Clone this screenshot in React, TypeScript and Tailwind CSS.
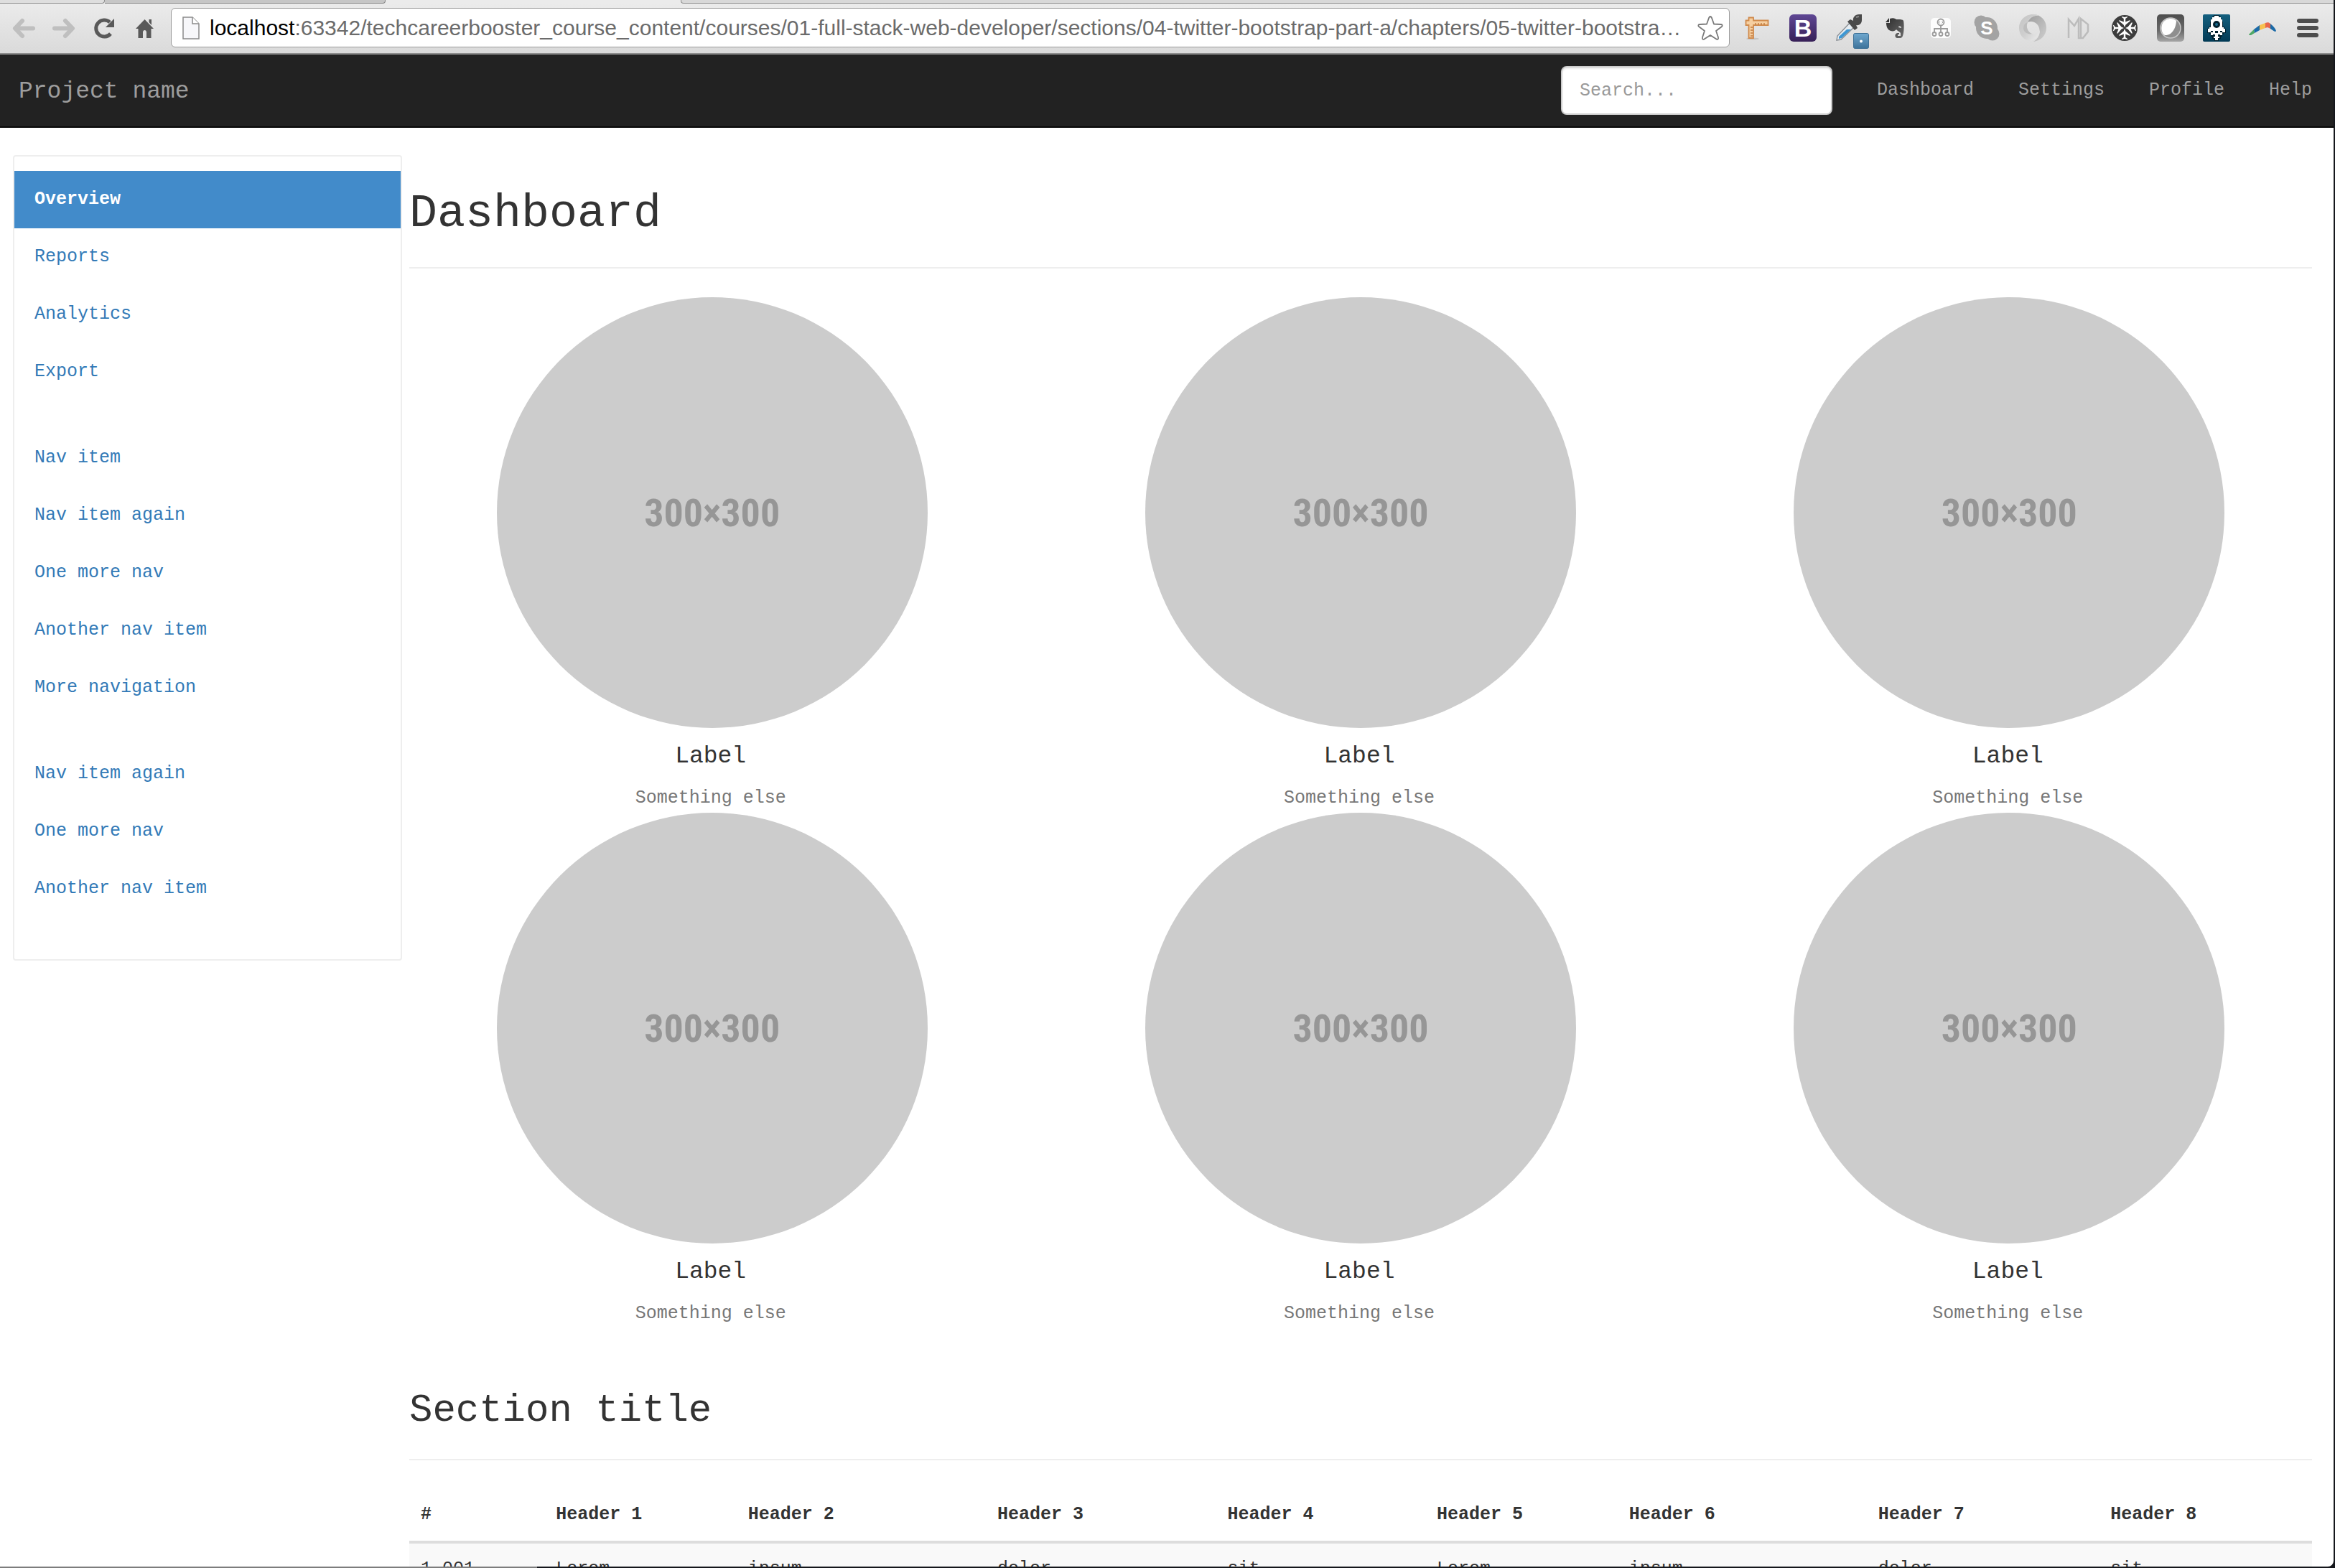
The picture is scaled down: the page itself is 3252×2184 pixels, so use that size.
import React from "react";

const pageFont = "font-['Liberation_Mono',monospace]";

function PageIcon() {
  return (
    <svg width="24" height="32" viewBox="0 0 24 32" className="shrink-0">
      <path d="M1 1H14L23 10V31H1Z" fill="#f7f7fa" stroke="#8b8b8b" strokeWidth="1.5" />
      <path d="M14 1V10H23" fill="#fff" stroke="#8b8b8b" strokeWidth="1.5" />
    </svg>
  );
}

const extensions: { name: string; art: React.ReactNode }[] = [
  {
    name: "Page ruler",
    art: (
      <>
        <ellipse cx="13" cy="34" rx="9" ry="1.5" fill="#c4c4c4" />
        <path d="M7.500 4.500H14V8.500H34.500V15H14V33H7.500V15H3.500V8.500H7.500Z" fill="#f6cfa0" stroke="#d08a4c" strokeWidth="1.800" />
        <path d="M17 12V15M21 12V15M25 12V15M29 12V15M10 18H13M10 22H13M10 26H13M10 30H13" stroke="#c07a3e" strokeWidth="1.400" />
      </>
    ),
  },
  {
    name: "Bootstrap",
    art: (
      <>
        <rect width="38" height="38" rx="6" fill="url(#purple)" />
        <text x="19" y="31" textAnchor="middle" fontSize="34" fontWeight="700" fontFamily="Liberation Sans, sans-serif" fill="#fff">
          B
        </text>
      </>
    ),
  },
  {
    name: "Eyedropper",
    art: (
      <>
        <path d="M2 36L3 30L20 12L26 18L8 35Z" fill="#e6ecf1" stroke="#8d9297" strokeWidth="1.500" />
        <path d="M5 31L16 21H22L9 33L5 34Z" fill="#3d97d3" />
        <path d="M17 10L21 7L25 9C24 4 28 0 33 0H37V8C37 13 33 16 29 15L31 19L27 22Z" fill="#4a4a4a" />
        <path d="M29 4L33 3" stroke="#8a8a8a" strokeWidth="2" />
        <rect x="25.500" y="26.500" width="21" height="21" rx="2" fill="url(#badge)" stroke="#3f7196" />
        <circle cx="36" cy="37.500" r="2" fill="#fff" />
      </>
    ),
  },
  {
    name: "Evernote",
    art: (
      <>
        <path d="M12 6C17 4 20 6 21 7C26 7 30 7 31 9C32 13 32 25 30 30C29 34 25 33 22 33C18 32 19 26 23 26H25V28H23V30H27V26C26 24 22 23 21 21C19 24 14 24 11 22C8 20 7 15 7 12H12Z" fill="url(#dark)" />
        <path d="M6 11L11 5V11Z" fill="#333" />
        <path d="M24 18C24 16 28 16 28 19Z" fill="#e6e6e6" />
      </>
    ),
  },
  {
    name: "Site map",
    art: (
      <>
        <rect x="5" y="5" width="28" height="28" rx="5" fill="#fcfcfc" />
        <g fill="none" stroke="#9b9b9b" strokeWidth="1.800">
          <circle cx="19" cy="11" r="4.500" />
          <path d="M17.500 9.500L16 11L17.500 12.500M20.500 9.500L22 11L20.500 12.500" strokeWidth="1" />
          <path d="M19 15.500V25M10 25V20H28V25" />
          <circle cx="10" cy="27.500" r="2.500" />
          <circle cx="19" cy="27.500" r="2.500" />
          <circle cx="28" cy="27.500" r="2.500" />
        </g>
      </>
    ),
  },
  {
    name: "Skype",
    art: (
      <>
        <circle cx="19" cy="19" r="15" fill="#a3a3a3" />
        <circle cx="11" cy="11" r="9.500" fill="#a3a3a3" />
        <circle cx="27" cy="27" r="9.500" fill="#a3a3a3" />
        <text x="19" y="28" textAnchor="middle" fontSize="26" fontWeight="700" fontFamily="Liberation Sans, sans-serif" fill="#fff">
          S
        </text>
      </>
    ),
  },
  {
    name: "JSON viewer",
    art: (
      <>
        <path d="M19 0C31 0 38 9 38 19C38 29 30 37 20 38C27 34 30 27 28 19C26 12 19 8 12 11C15 4 22 1 27 2C24 0 22 0 19 0Z" fill="url(#ringB)" />
        <path d="M19 0C24 0 27 1 28 2C20 1 14 5 12 11C9 17 12 25 18 27C23 29 27 26 29 22C29 30 24 36 14 37C5 35 0 27 0 19C0 9 8 0 19 0Z" fill="url(#ringA)" />
        <path d="M12 11C9 17 12 25 18 27C13 28 7 26 6 20C6 15 8 12 12 11Z" fill="#bdbdbd" />
      </>
    ),
  },
  {
    name: "Markdown",
    art: <path d="M5 33V7L13 16L19 6V33H25L32 24V14L22 6V33" fill="none" stroke="#bcbcbc" strokeWidth="2.500" />,
  },
  {
    name: "Aircraft",
    art: (
      <>
        <circle cx="19" cy="19" r="18" fill="#3c3c3c" />
        {[0, 90, 180, 270].map((turn) => (
          <path
            key={turn}
            transform={`rotate(${turn} 19 19)`}
            d="M19 18L17.600 14.500L11.500 9.500V8L17.800 10.500V6L15 4V3L19 4L23 3V4L20.200 6V10.500L26.500 8V9.500L20.400 14.500Z"
            fill="#fff"
          />
        ))}
      </>
    ),
  },
  {
    name: "Lens",
    art: (
      <>
        <rect width="38" height="38" rx="5" fill="url(#lens)" />
        <circle cx="19" cy="19" r="14" fill="#8f8f8f" stroke="#c9c9c9" strokeWidth="1.500" />
        <path d="M11 29C16 30 26 25 27 9C22 4 12 5 8 12C5 18 6 26 11 29Z" fill="#fff" />
      </>
    ),
  },
  {
    name: "Rocket",
    art: (
      <>
        <rect width="38" height="38" rx="2" fill="url(#teal)" />
        <path d="M15 1H23V3H25V6H27V10H28V17H30V20H32V26H29V28H27V31H25V34H22V37H16V34H13V31H11V28H9V26H6V20H8V17H10V10H11V6H13V3H15Z" fill="#00202e" />
        <path d="M16 2H22V4H25V7H27V18H29V20H31V25H27V23H11V25H7V20H9V18H11V7H13V4H16Z" fill="#fff" />
        <path d="M11 25H14V23H17V26H21V23H24V25H27V29H24V28H21V31H23V33H21V36H17V33H15V31H17V28H14V29H11Z" fill="#fff" />
        <circle cx="19" cy="14" r="5" fill="#00202e" />
        <circle cx="19" cy="14" r="2" fill="#17688c" />
      </>
    ),
  },
  {
    name: "Boomerang",
    art: (
      <>
        <path d="M0 28L7 21L8 26L3 29C1 29 0 29 0 28Z" fill="#4fa866" />
        <path d="M7 21L15 15V22L8 26Z" fill="#1b6aa8" />
        <path d="M15 15L23 12V19L15 22Z" fill="#f7c14f" />
        <path d="M23 12C26 11 28 11 30 13V20C27 18 25 18 23 19Z" fill="#e8674c" />
        <path d="M30 13C34 16 37 20 38 23C37 25 36 24 30 20Z" fill="#1b6aa8" />
      </>
    ),
  },
  {
    name: "Menu",
    art: (
      <g fill="#4d4d4d">
        <rect x="3" y="6" width="30" height="6" rx="3" />
        <rect x="3" y="16" width="30" height="6" rx="3" />
        <rect x="3" y="26" width="30" height="6" rx="3" />
      </g>
    ),
  },
];

function Gradients() {
  return (
    <svg width="0" height="0" className="absolute">
      <defs>
        <linearGradient id="purple" x1="0" y1="0" x2="0" y2="1">
          <stop offset="0" stopColor="#5f4794" />
          <stop offset="1" stopColor="#372057" />
        </linearGradient>
        <linearGradient id="badge" x1="0" y1="0" x2="0" y2="1">
          <stop offset="0" stopColor="#6fa8cf" />
          <stop offset="1" stopColor="#3e739a" />
        </linearGradient>
        <linearGradient id="dark" x1="0" y1="0" x2="1" y2="1">
          <stop offset="0" stopColor="#2e2e2e" />
          <stop offset="1" stopColor="#6b6b6b" />
        </linearGradient>
        <linearGradient id="ringA" x1="0" y1="0" x2="1" y2="1">
          <stop offset="0" stopColor="#c4c4c4" />
          <stop offset="0.500" stopColor="#cfcfcf" />
          <stop offset="1" stopColor="#ededed" />
        </linearGradient>
        <linearGradient id="ringB" x1="0" y1="0" x2="1" y2="1">
          <stop offset="0" stopColor="#9c9c9c" />
          <stop offset="1" stopColor="#d0d0d0" />
        </linearGradient>
        <linearGradient id="lens" x1="0" y1="0" x2="0" y2="1">
          <stop offset="0" stopColor="#4e4e4e" />
          <stop offset="0.600" stopColor="#6a6a6a" />
          <stop offset="1" stopColor="#a5a5a5" />
        </linearGradient>
        <linearGradient id="teal" x1="0" y1="0" x2="0" y2="1">
          <stop offset="0" stopColor="#14607f" />
          <stop offset="1" stopColor="#023a55" />
        </linearGradient>
      </defs>
    </svg>
  );
}

function TabStrip() {
  return (
    <div className="flex h-[5px] bg-[#ebebeb]">
      <div className="w-[146px] rounded-br border-r border-b border-[#8e8e8e] bg-[#dedede]" />
      <div className="w-[391px] rounded-br border-r border-b border-[#8a8a8a] bg-[#c6c6c6]" />
      <div className="ml-[411px] flex-1 rounded-bl border-b border-l border-[#8e8e8e] bg-[#d8d8d8]" />
    </div>
  );
}

function Toolbar() {
  return (
    <div className="flex h-[71px] items-center border-b-2 border-[#8d8d8d] bg-linear-to-b from-[#ebebeb] to-[#dadada] pr-4 pl-[14px] pb-[2px]">
      <div className="flex shrink-0 gap-[18px]">
        <button aria-label="Back" className="h-[38px] w-[38px]">
          <svg width="38" height="38" viewBox="0 0 38 38" fill="none" stroke="#bfbfbf" strokeWidth="6" strokeLinecap="round" strokeLinejoin="round">
            <path d="M17 9L7 19.500L17 30M8 19.500H32" />
          </svg>
        </button>
        <button aria-label="Forward" className="h-[38px] w-[38px]">
          <svg width="38" height="38" viewBox="0 0 38 38" fill="none" stroke="#bfbfbf" strokeWidth="6" strokeLinecap="round" strokeLinejoin="round">
            <path d="M21 9L31 19.500L21 30M6 19.500H30" />
          </svg>
        </button>
        <button aria-label="Reload" className="h-[38px] w-[38px]">
          <svg width="38" height="38" viewBox="0 0 38 38">
            <path d="M28 27A11.500 11.500 0 1 1 27 11" fill="none" stroke="#595959" strokeWidth="5" />
            <path d="M33 6V18H21Z" fill="#595959" />
          </svg>
        </button>
        <button aria-label="Home" className="h-[38px] w-[38px]">
          <svg width="38" height="38" viewBox="0 0 38 38" fill="#595959">
            <path d="M19.500 7L32 20H28.500V33H22V25C22 21 17 21 17 25V33H10.500V20H7Z" />
            <path d="M25.500 7H29V15L25.500 11Z" />
          </svg>
        </button>
      </div>
      <div className="ml-[18px] flex h-[55px] min-w-0 flex-1 items-center rounded-md border border-[#9b9b9b] bg-white pr-2 pl-[15px]">
        <PageIcon />
        <p className="ml-[14px] min-w-0 flex-1 truncate font-['Liberation_Sans',Arial,sans-serif] text-[30px] leading-[36px] text-[#6b6b6b]">
          <span className="text-black">localhost</span>
          :63342/techcareerbooster_course_content/courses/01-full-stack-web-developer/sections/04-twitter-bootstrap-part-a/chapters/05-twitter-bootstra…
        </p>
        <button aria-label="Bookmark this page" className="shrink-0">
          <svg width="36" height="36" viewBox="0 0 36 36" fill="#fff" stroke="#7a7a7a" strokeWidth="1.800" strokeLinejoin="round">
            <path d="M18 2C19 2 19.500 3 20 4L23 12.500L33 13C35 13.200 35 15 34 16L26 22L29 31C29.500 33.500 28 34.500 26.500 33.500L18 28L9.500 33.500C8 34.500 6.500 33.500 7 31L10 22L2 16C1 15 1 13.200 3 13L13 12.500L16 4C16.500 3 17 2 18 2Z" />
          </svg>
        </button>
      </div>
      <div className="ml-[19px] flex shrink-0 gap-[26px]">
        {extensions.map((item) => (
          <button key={item.name} aria-label={item.name} className="h-[38px] w-[38px]">
            <svg width="38" height="38" viewBox="0 0 38 38" className="overflow-visible">
              {item.art}
            </svg>
          </button>
        ))}
      </div>
    </div>
  );
}

function Navbar() {
  return (
    <nav className="flex h-[102px] items-center justify-between border-b-2 border-[#080808] bg-[#222] pr-[30px] pl-[26px] text-[#9d9d9d]">
      <a href="#home" className="pt-1 text-[33px] leading-[40px]">
        Project name
      </a>
      <div className="flex items-center gap-[62px]">
        <input
          type="text"
          aria-label="Search"
          placeholder="Search..."
          className="h-[68px] w-[378px] rounded-lg border-2 border-[#ccc] bg-white px-6 text-[25px] text-[#555] shadow-[inset_0_2px_2px_rgba(0,0,0,0.075)] placeholder:text-[#999]"
        />
        {["Dashboard", "Settings", "Profile", "Help"].map((label) => (
          <a key={label} href={`#${label.toLowerCase()}`} className="text-[25px] leading-[40px]">
            {label}
          </a>
        ))}
      </div>
    </nav>
  );
}

const navGroups = [
  ["Overview", "Reports", "Analytics", "Export"],
  ["Nav item", "Nav item again", "One more nav", "Another nav item", "More navigation"],
  ["Nav item again", "One more nav", "Another nav item"],
];

function Sidebar() {
  return (
    <aside className="w-[542px] shrink-0 self-start rounded border-2 border-[#eee] pt-5 pb-[18px]">
      {navGroups.map((group, g) => (
        <ul key={g} className="mb-10">
          {group.map((label) => (
            <li key={label}>
              <a
                href="#section"
                className={
                  label === "Overview"
                    ? "block bg-[#428bca] px-7 py-5 text-[25px] leading-[40px] font-bold text-white"
                    : "block px-7 py-5 text-[25px] leading-[40px] text-[#337ab7]"
                }
              >
                {label}
              </a>
            </li>
          ))}
        </ul>
      ))}
    </aside>
  );
}

function Placeholder() {
  return (
    <div className="flex w-full flex-col items-center">
      <div className="flex h-[600px] w-[600px] items-center justify-center rounded-full bg-[#ccc] font-['Roboto_Condensed','Liberation_Sans',sans-serif] text-[54px] font-bold text-[#969696]">
        300×300
      </div>
      <h4 className="mt-5 pr-1 text-[33px] leading-[40px] text-[#333]">Label</h4>
      <span className="mt-[18px] pr-1 text-[25px] leading-[40px] text-[#777]">Something else</span>
    </div>
  );
}

const columns = [
  { head: "#", cell: "1,001", width: "w-[7.1%]" },
  { head: "Header 1", cell: "Lorem", width: "w-[10.1%]" },
  { head: "Header 2", cell: "ipsum", width: "w-[13.1%]" },
  { head: "Header 3", cell: "dolor", width: "w-[12.1%]" },
  { head: "Header 4", cell: "sit", width: "w-[11%]" },
  { head: "Header 5", cell: "Lorem", width: "w-[10.1%]" },
  { head: "Header 6", cell: "ipsum", width: "w-[13.1%]" },
  { head: "Header 7", cell: "dolor", width: "w-[12.2%]" },
  { head: "Header 8", cell: "sit", width: "w-[11.2%]" },
];

function DataTable() {
  return (
    <table className="w-full table-fixed border-collapse text-left text-[25px] leading-[40px] text-[#333]">
      <thead>
        <tr className="border-b-4 border-[#ddd]">
          {columns.map((c) => (
            <th key={c.head} scope="col" className={`${c.width} p-4 font-bold`}>
              {c.head}
            </th>
          ))}
        </tr>
      </thead>
      <tbody>
        <tr className="bg-[#f9f9f9]">
          {columns.map((c) => (
            <td key={c.head} className="p-4">
              {c.cell}
            </td>
          ))}
        </tr>
      </tbody>
    </table>
  );
}

export default function App() {
  return (
    <div className="h-screen bg-[linear-gradient(to_right,#7d7d7d_23%,#15171c_23%)] pr-[2px] pb-[2px]">
      <Gradients />
      <div className={`flex h-full flex-col overflow-hidden rounded-br-lg bg-white ${pageFont}`}>
        <header className="shrink-0">
          <TabStrip />
          <Toolbar />
          <Navbar />
        </header>
        <div className="flex min-h-0 flex-1 overflow-hidden pr-[30px] pl-[18px]">
          <div className="pt-[38px]">
            <Sidebar />
          </div>
          <main className="ml-[10px] min-w-0 flex-1 text-[#333]">
            <h1 className="border-b-2 border-[#eee] pt-20 pb-[34px] text-[65px] leading-[80px]">Dashboard</h1>
            <div className="-mx-[30px] mt-10 grid grid-cols-3">
              {[0, 1, 2, 3, 4, 5].map((i) => (
                <Placeholder key={i} />
              ))}
            </div>
            <h2 className="mt-20 mb-10 border-b-2 border-[#eee] pb-8 text-[54px] leading-[70px]">Section title</h2>
            <DataTable />
          </main>
        </div>
      </div>
    </div>
  );
}
